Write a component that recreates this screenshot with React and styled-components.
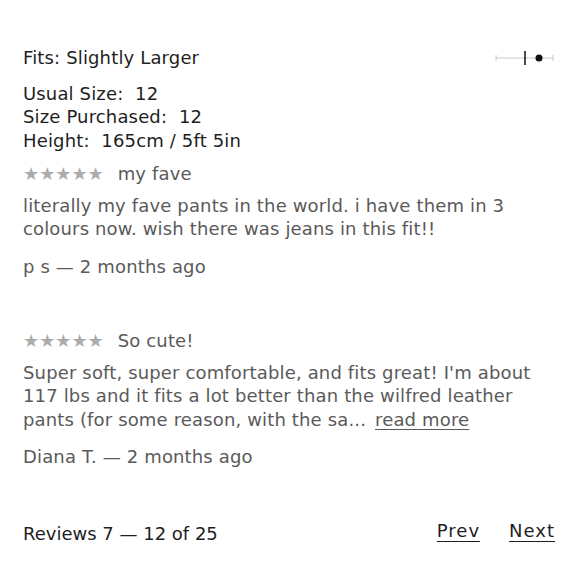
import React from 'react';
import styled, { createGlobalStyle } from 'styled-components';

const GlobalStyle = createGlobalStyle`
body {
	margin: 0;
	background: #fff;
	font-family: "DejaVu Sans", "Liberation Sans", sans-serif;
}
`

const Page = styled.div`
padding: 46px 25px 0 23px;
font-size: 18px;
line-height: 23.5px;
letter-spacing: 0.15px;
color: #1e1e1e;
`

const FitRow = styled.div`
display: flex;
justify-content: space-between;
align-items: center;
`

const Specs = styled.div`
margin-top: 12px;
`

const Review = styled.div`
margin-top: ${props => props.first ? '10px' : '51px'};
color: #5a5a5a;
`

const ReviewHead = styled.div`
display: flex;
align-items: center;
gap: 14px;
`

const Stars = styled.span`
color: #ababab;
font-size: 18px;
letter-spacing: 0;
`

const Body = styled.p`
margin: 8px 0 0;
`

const Author = styled.div`
margin-top: 14px;
`

const ReadMore = styled.a`
display: inline-block;
color: #5a5a5a;
text-decoration: underline;
text-underline-offset: 3px;
margin-left: 9px;
`

const Footer = styled.div`
margin-top: 53px;
display: flex;
justify-content: space-between;
align-items: center;
letter-spacing: 0;
`

const Pager = styled.div`
display: flex;
gap: 29px;
margin-top: -5px;
`

const PageLink = styled.a`
color: #1e1e1e;
text-decoration: underline;
text-underline-offset: 4px;
letter-spacing: 1px;
`

const FitScale = () => (
	<svg width="60" height="18" viewBox="0 0 60 18">
		<line x1="1" y1="9" x2="58" y2="9" stroke="#c8c8c8" strokeWidth="1" />
		<line x1="1" y1="6" x2="1" y2="12" stroke="#c8c8c8" strokeWidth="1" />
		<line x1="58" y1="6" x2="58" y2="12" stroke="#c8c8c8" strokeWidth="1" />
		<line x1="30" y1="2" x2="30" y2="16" stroke="#111" strokeWidth="1.5" />
		<circle cx="44" cy="9" r="3.5" fill="#111" />
	</svg>
)

const App = () => {
	return (
		<>
			<GlobalStyle />
			<Page>
				<FitRow>
					<span>Fits: Slightly Larger</span>
					<FitScale />
				</FitRow>
				<Specs>
					<div>Usual Size:&nbsp; 12</div>
					<div>Size Purchased:&nbsp; 12</div>
					<div>Height:&nbsp; 165cm / 5ft 5in</div>
				</Specs>

				<Review first>
					<ReviewHead>
						<Stars>★★★★★</Stars>
						<span>my fave</span>
					</ReviewHead>
					<Body>literally my fave pants in the world. i have them in 3 colours now. wish there was jeans in this fit!!</Body>
					<Author>p s — 2 months ago</Author>
				</Review>

				<Review>
					<ReviewHead>
						<Stars>★★★★★</Stars>
						<span>So cute!</span>
					</ReviewHead>
					<Body>
						Super soft, super comfortable, and fits great! I'm about 117 lbs and it fits a lot better than the wilfred leather pants (for some reason, with the sa...
						<ReadMore href="#">read more</ReadMore>
					</Body>
					<Author>Diana T. — 2 months ago</Author>
				</Review>

				<Footer>
					<span>Reviews 7 — 12 of 25</span>
					<Pager>
						<PageLink href="#">Prev</PageLink>
						<PageLink href="#">Next</PageLink>
					</Pager>
				</Footer>
			</Page>
		</>
	)
}

export default App;
